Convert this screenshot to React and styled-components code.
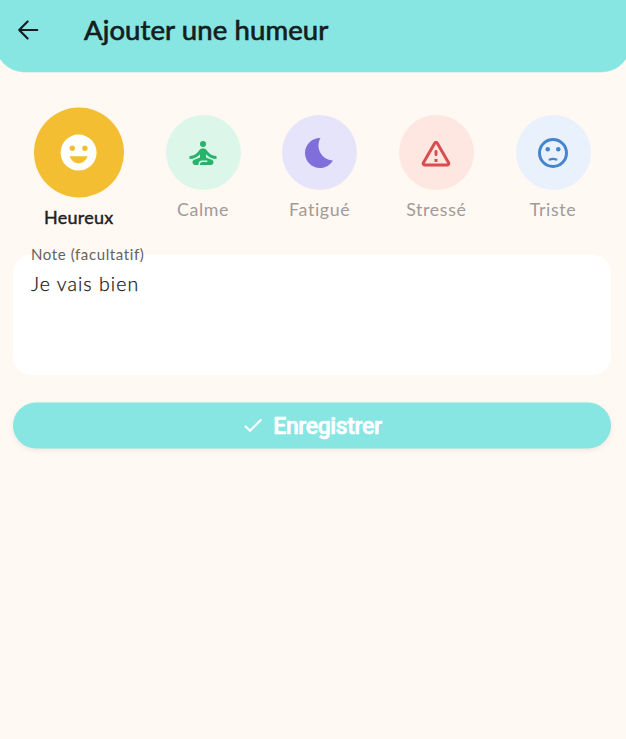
import React from 'react';
import styled, { createGlobalStyle } from 'styled-components';
import { MdSelfImprovement, MdBedtime } from 'react-icons/md';

const GlobalStyle = createGlobalStyle`
  * { box-sizing: border-box; }
  body {
    margin: 0;
    background: #fff8f3;
    font-family: Lato, "Noto Sans", sans-serif;
    overflow: hidden;
  }
`;

const Screen = styled.div`
  min-height: 739px;
  overflow: hidden;
`;

const Header = styled.header`
  display: flex;
  align-items: center;
  height: 72px;
  margin: 0 -4px;
  padding: 0 20px 12px;
  border-radius: 0 0 28px 28px;
  background: #87e5e2;
  box-shadow: 0 0.5px 0 rgba(135, 229, 226, 0.5);
  color: #141d20;
`;

const BackButton = styled.button`
  display: flex;
  width: 24px;
  height: 24px;
  padding: 0;
  border: 0;
  background: none;
  color: inherit;
`;

const Title = styled.h1`
  margin: 0 0 0 44px;
  font-size: 27.5px;
  line-height: 36px;
  font-weight: 400;
  letter-spacing: 0.12px;
  white-space: nowrap;
  -webkit-text-stroke: 0.7px currentColor;
`;

const MoodList = styled.div`
  display: flex;
  justify-content: center;
  gap: 41.7px;
  height: 147px;
  margin-top: 36px;
  padding-right: 1.6px;
`;

const Mood = styled.button`
  display: flex;
  flex-direction: column;
  align-items: center;
  width: ${({ $selected }) => ($selected ? 90 : 75)}px;
  padding: ${({ $selected }) => ($selected ? 0 : '7px 0 0')};
  border: 0;
  background: none;
  font-family: inherit;
`;

const MoodDisc = styled.span`
  display: flex;
  align-items: center;
  justify-content: center;
  flex: none;
  width: ${({ $selected }) => ($selected ? 90 : 75)}px;
  height: ${({ $selected }) => ($selected ? 90 : 75)}px;
  border-radius: 50%;
  background: ${({ $background }) => $background};
  color: ${({ $color }) => $color};
  transform: ${({ $selected }) => ($selected ? 'translateY(-0.5px)' : 'none')};
`;

const MoodLabel = styled.span`
  margin-top: 7px;
  font-size: ${({ $selected }) => ($selected ? 18 : 17.8)}px;
  line-height: 24px;
  letter-spacing: ${({ $selected }) => ($selected ? 0.25 : 0.65)}px;
  color: ${({ $selected }) => ($selected ? '#202020' : '#9f9b98')};
  -webkit-text-stroke: ${({ $selected }) => ($selected ? '0.4px currentColor' : '0')};
`;

const Form = styled.main`
  display: flex;
  flex-direction: column;
  gap: 28px;
  padding: 0 15px 0 13px;
`;

const NoteField = styled.label`
  display: block;
  height: 120px;
  padding: 0 18px;
  border-radius: 18px;
  background: #fff;
`;

const NoteLabel = styled.span`
  display: block;
  margin-top: -11px;
  font-size: 15px;
  line-height: 20px;
  letter-spacing: 0.6px;
  color: #66615e;
`;

const NoteInput = styled.textarea`
  display: block;
  width: 100%;
  height: 90px;
  margin-top: 6px;
  padding: 0;
  border: 0;
  outline: 0;
  resize: none;
  background: transparent;
  font-family: inherit;
  font-size: 19.5px;
  font-weight: 300;
  line-height: 28px;
  letter-spacing: 1.05px;
  color: #151515;
  -webkit-text-stroke: 0.25px currentColor;
`;

const SaveButton = styled.button`
  display: flex;
  align-items: center;
  justify-content: center;
  gap: 8px;
  height: 46px;
  padding: 1px 7px 0 6px;
  border: 0;
  border-radius: 23px;
  background: #87e5e2;
  box-shadow: 0 2px 5px rgba(0, 0, 0, 0.07);
  color: #fff;
  font-family: Roboto, sans-serif;
  font-size: 23px;
  font-weight: 500;
  letter-spacing: -0.4px;
  -webkit-text-stroke: 0.6px #fff;
  transform: translateY(-0.5px);
`;

const BackIcon = () => (
  <svg width="24" height="24" viewBox="0 0 24 24" fill="none" stroke="currentColor" strokeWidth="2.1" strokeLinecap="round" strokeLinejoin="round">
    <path d="M21.3 12H3.6M11.6 3.4L3.2 12l8.4 8.6" />
  </svg>
);

const CheckIcon = () => (
  <svg width="24" height="24" viewBox="0 0 24 24" fill="none" stroke="currentColor" strokeWidth="2.1">
    <path d="M4.1 11.4L9 16.3L20.3 5" />
  </svg>
);

const HappyIcon = ({ size }) => (
  <svg width={size} height={size} viewBox="0 -0.25 24 24" fill="currentColor" fillRule="evenodd">
    <path d="M12 2a10 10 0 1 0 0 20a10 10 0 1 0 0-20zM8.5 8.1a1.5 1.5 0 1 1 0 3a1.5 1.5 0 1 1 0-3zM15.5 8.1a1.5 1.5 0 1 1 0 3a1.5 1.5 0 1 1 0-3zM12 17.9c-2.28 0-4.22-1.6-5-3.9h10c-.78 2.3-2.72 3.9-5 3.9z" />
  </svg>
);

const WarningIcon = ({ size }) => (
  <svg width={size} height={size} viewBox="0 0 24 24" fill="currentColor">
    <path d="M12 5.99L19.53 19H4.47L12 5.99M2.74 18c-.77 1.33.19 3 1.73 3h15.06c1.54 0 2.5-1.67 1.73-3L13.73 4.99c-.77-1.33-2.69-1.33-3.46 0L2.74 18zM11 11v2c0 .55.45 1 1 1s1-.45 1-1v-2c0-.55-.45-1-1-1s-1 .45-1 1zm0 5h2v2h-2z" />
  </svg>
);

const SadIcon = ({ size }) => (
  <svg width={size} height={size} viewBox="0 0 24 24" fill="none">
    <circle cx="12" cy="12" r="9" stroke="currentColor" strokeWidth="2" />
    <circle cx="8.5" cy="9.5" r="1.5" fill="currentColor" />
    <circle cx="15.5" cy="9.5" r="1.5" fill="currentColor" />
    <path d="M9.8 16.4Q12 15.3 14.2 16.4" stroke="currentColor" strokeWidth="1.5" strokeLinecap="round" />
  </svg>
);

const moods = [
  { label: 'Heureux', Icon: HappyIcon, color: '#fff', background: '#f4be32', selected: true },
  { label: 'Calme', Icon: MdSelfImprovement, color: '#27b36b', background: '#dcf7e9' },
  { label: 'Fatigué', Icon: MdBedtime, color: '#806fdb', background: '#e6e4fa' },
  { label: 'Stressé', Icon: WarningIcon, color: '#d84d50', background: '#fee7e1' },
  { label: 'Triste', Icon: SadIcon, color: '#4584cf', background: '#e9f2fc' },
];

export default function App() {
  return (
    <Screen>
      <GlobalStyle />
      <Header>
        <BackButton aria-label="Retour"><BackIcon /></BackButton>
        <Title>Ajouter une humeur</Title>
      </Header>
      <MoodList>
        {moods.map(({ label, Icon, color, background, selected }) => (
          <Mood key={label} $selected={selected}>
            <MoodDisc $selected={selected} $background={background} $color={color}>
              <Icon size={selected ? 43.2 : 36} />
            </MoodDisc>
            <MoodLabel $selected={selected}>{label}</MoodLabel>
          </Mood>
        ))}
      </MoodList>
      <Form>
        <NoteField>
          <NoteLabel>Note (facultatif)</NoteLabel>
          <NoteInput defaultValue="Je vais bien" spellCheck={false} />
        </NoteField>
        <SaveButton>
          <CheckIcon />
          Enregistrer
        </SaveButton>
      </Form>
    </Screen>
  );
}
